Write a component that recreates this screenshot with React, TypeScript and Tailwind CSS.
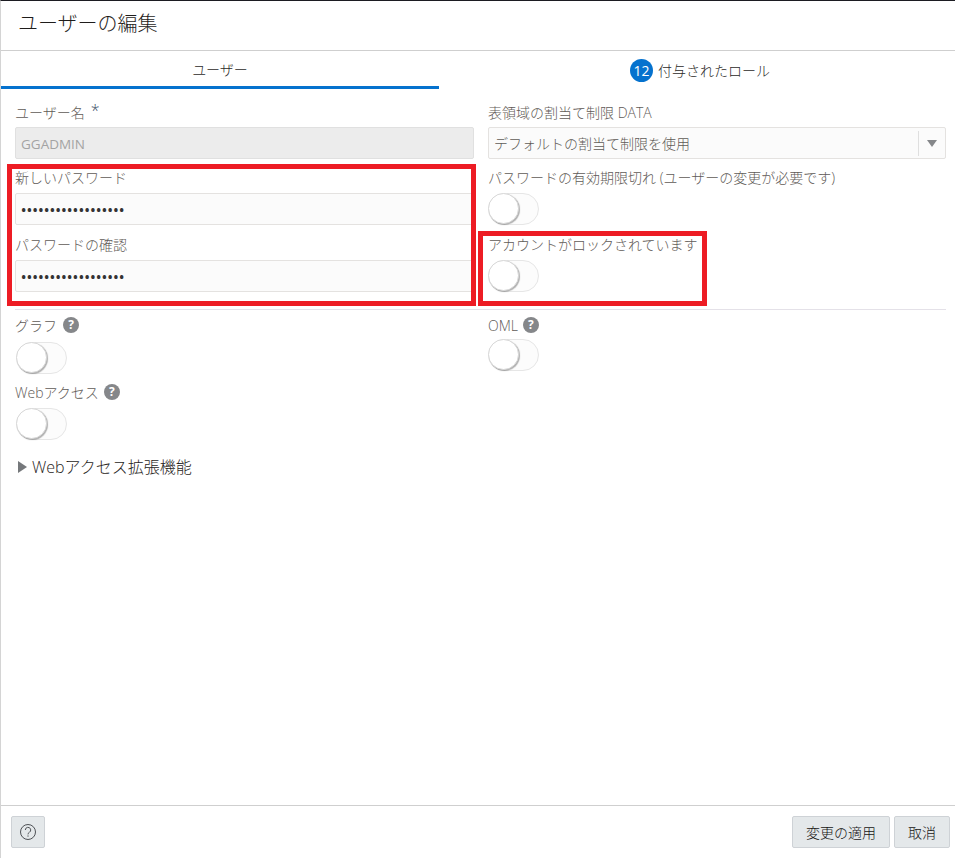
const font = { fontFamily: '"Open Sans", "Noto Sans CJK JP", sans-serif' };

function Toggle() {
  return (
    <div className="relative h-[32px] w-[51px] rounded-full border border-[#e6e6e6] bg-[#fcfcfc]">
      <div className="absolute -left-px -top-px h-[31px] w-[31px] rounded-full border border-[#d8d8d8] bg-white shadow-[1px_1px_1px_rgba(0,0,0,0.3)]" />
    </div>
  );
}

function HelpIcon() {
  return (
    <span className="flex h-[16px] w-[16px] items-center justify-center rounded-full bg-[#85878a] text-[12px] font-bold leading-none text-white">
      ?
    </span>
  );
}

function Label({ text }: { text: string }) {
  return <div className="h-[20px] text-[14px] leading-[20px] text-[#5f5b57]">{text}</div>;
}

function PasswordField({ label }: { label: string }) {
  return (
    <div>
      <Label text={label} />
      <div className="mt-[5px] flex h-[32px] items-center rounded-[2px] border border-[#e4e2e0] bg-[#fbfbfb] pl-[5px] text-[14px] font-semibold tracking-[0.5px] text-[#333]">
        ••••••••••••••••••
      </div>
    </div>
  );
}

export default function App() {
  return (
    <div style={font} className="relative flex h-[858px] w-[955px] flex-col border-l border-t border-l-[#d4d4d4] border-t-[#1c1c22] bg-white font-light">
      {/* Header */}
      <div className="flex h-[50px] shrink-0 items-center border-b border-[#cfcfcf] pb-[3px] pl-[17px] text-[20px] text-[#1f1d1b]">
        ユーザーの編集
      </div>

      {/* Tabs */}
      <div className="flex h-[38px] shrink-0">
        <div className="flex w-[438px] items-center justify-center border-b-[3px] border-[#0572ce] pt-[1px] text-[14px] text-[#2c2a28]">
          ユーザー
        </div>
        <div className="flex flex-1 items-center justify-center gap-[5px] pl-[6px] text-[14px] text-[#2c2a28]">
          <span className="flex h-[23px] w-[23px] items-center justify-center rounded-full bg-[#0572ce] text-[14px] font-normal text-white">12</span>
          付与されたロール
        </div>
      </div>

      {/* Form */}
      <div className="flex-1 pl-[14px] pr-[8px] pt-[14px]">
        <div className="grid grid-cols-[459px_458px] gap-x-[14px]">
          <div className="flex flex-col">
            <div className="flex h-[24px] items-start text-[14px] leading-[20px] text-[#5f5b57]">
              ユーザー名<span className="ml-[6px] mt-[-3px] text-[16px] text-[#44546a]">*</span>
            </div>
            <div className="flex h-[32px] items-center rounded-[2px] border border-[#e0e0e0] bg-[#ececec] pl-[5px] pt-[2px] text-[13.5px] font-normal text-[#a3a3a3]">
              GGADMIN
            </div>
            <div className="mt-[9px] flex flex-col gap-[10px]">
              <PasswordField label="新しいパスワード" />
              <PasswordField label="パスワードの確認" />
            </div>
          </div>

          <div className="flex flex-col">
            <div className="h-[24px] text-[14px] leading-[20px] text-[#5f5b57]">表領域の割当て制限 DATA</div>
            <div className="flex h-[32px] items-center rounded-[2px] border border-[#e4e2e0] bg-[#fbfbfb] pl-[5px] text-[14px] text-[#5f5b57]">
              <span className="flex-1">デフォルトの割当て制限を使用</span>
              <span className="flex h-[25px] w-[27px] items-center justify-center border-l border-[#dfdfdf]">
                <svg width="10" height="7" viewBox="0 0 10 7"><path d="M0 0h10L5 7z" fill="#85878a" /></svg>
              </span>
            </div>
            <div className="mt-[9px]">
              <Label text="パスワードの有効期限切れ (ユーザーの変更が必要です)" />
              <div className="mt-[5px]"><Toggle /></div>
            </div>
            <div className="mt-[10px]">
              <Label text="アカウントがロックされています" />
              <div className="mt-[5px]"><Toggle /></div>
            </div>
          </div>
        </div>

        <div className="mt-[17px] h-px w-[931px] bg-[#e4e1e8]" />

        <div className="grid grid-cols-[459px_458px] gap-x-[14px]">
          <div className="flex flex-col">
            <div className="mt-[5px] flex h-[20px] items-center gap-[6px] text-[14px] text-[#5f5b57]">
              グラフ <HelpIcon />
            </div>
            <div className="ml-px mt-[7px]"><Toggle /></div>
            <div className="mt-[8px] flex h-[20px] items-center gap-[5px] text-[14px] text-[#5f5b57]">
              Webアクセス <HelpIcon />
            </div>
            <div className="ml-px mt-[6px]"><Toggle /></div>
          </div>
          <div className="flex flex-col">
            <div className="mt-[5px] flex h-[20px] items-center gap-[5px] text-[14px] text-[#5f5b57]">
              OML <HelpIcon />
            </div>
            <div className="mt-[4px]"><Toggle /></div>
          </div>
        </div>

        <div className="mt-[16px] flex h-[22px] items-center gap-[5px] pl-[3px] text-[16px] text-[#1f1d1b]">
          <svg width="9" height="12" viewBox="0 0 9 12"><path d="M0 0l9 6-9 6z" fill="#75787b" /></svg>
          Webアクセス拡張機能
        </div>
      </div>

      {/* Footer */}
      <div className="flex h-[53px] shrink-0 items-start justify-between border-t border-[#cfcfcf] pl-[10px] pr-[5px] pt-[10px]">
        <button className="flex h-[32px] w-[34px] items-center justify-center rounded-[2px] border border-[#ced2d6] bg-[#e4e8ea]">
          <svg width="16" height="16" viewBox="0 0 16 16" fill="none" stroke="#4f5256" strokeWidth="1">
            <circle cx="8" cy="8" r="7.5" />
            <path d="M5.3 6a2.7 2.7 0 1 1 4 2.4c-.9.5-1.3 1.1-1.3 2" />
            <path d="M8 11.4v1.3" />
          </svg>
        </button>
        <div className="flex gap-[4px]">
          <button className="flex h-[32px] w-[98px] items-center justify-center rounded-[2px] border border-[#ced2d6] bg-[#e4e8ea] text-[14px] text-[#161513]">変更の適用</button>
          <button className="flex h-[32px] w-[56px] items-center justify-center rounded-[2px] border border-[#ced2d6] bg-[#e4e8ea] text-[14px] text-[#161513]">取消</button>
        </div>
      </div>

      {/* Red annotation boxes */}
      <div className="absolute left-[6px] top-[163px] h-[142px] w-[469px] border-[5px] border-[#ed1c24]" />
      <div className="absolute left-[477px] top-[230px] h-[75px] w-[229px] border-[5px] border-[#ed1c24]" />
    </div>
  );
}
